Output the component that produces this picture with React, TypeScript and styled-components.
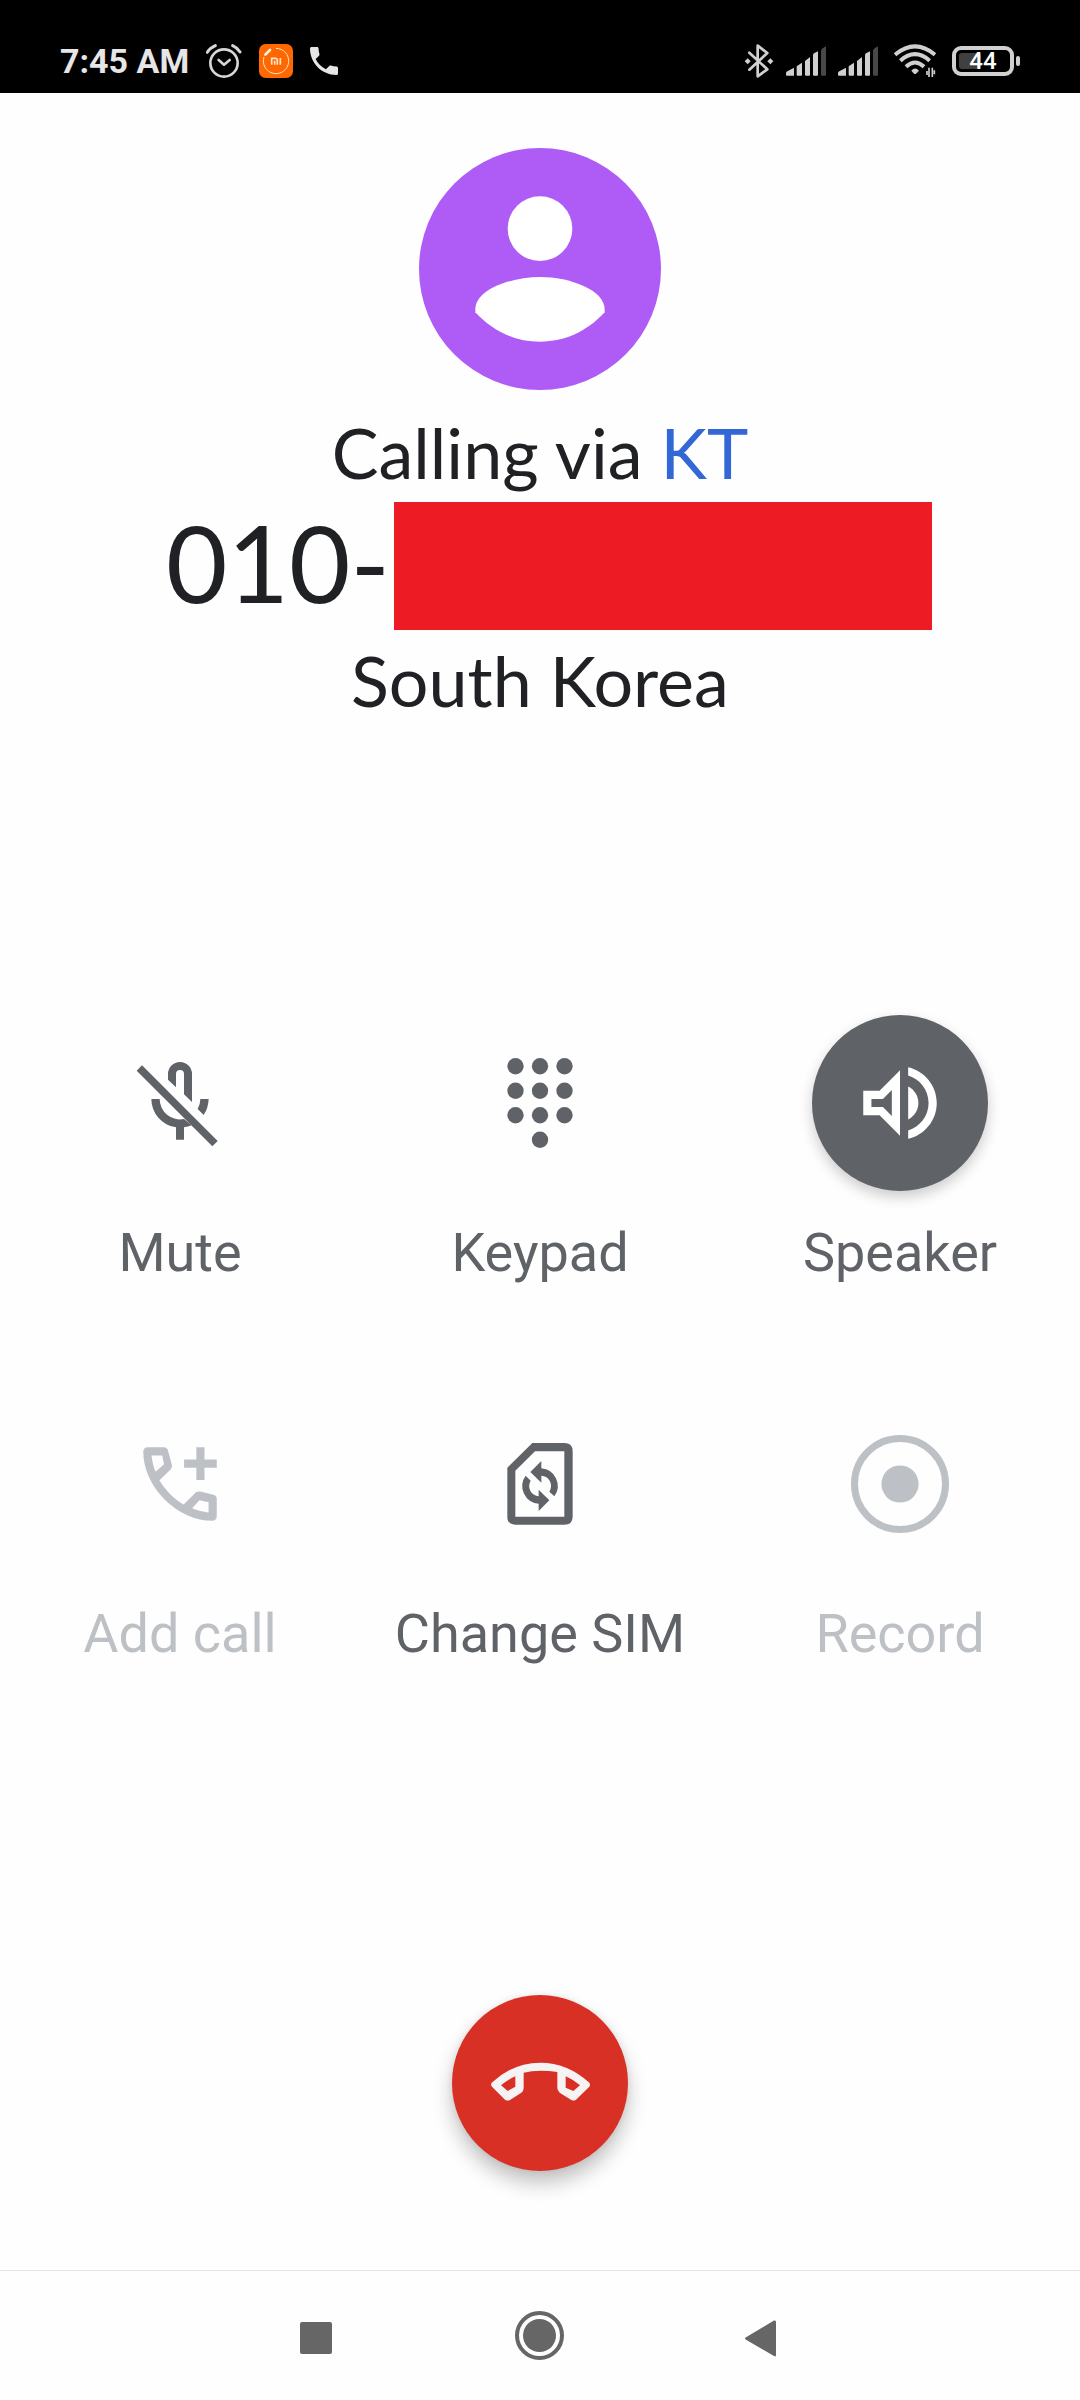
import React from "react";
import styled, { createGlobalStyle } from "styled-components";

const GlobalStyle = createGlobalStyle`
  *, *::before, *::after { box-sizing: border-box; }
  body { margin: 0; background: #fefefe; }
`;

const displayFont = `Lato, "Open Sans", sans-serif`;
const bodyFont = `Roboto, "Noto Sans", sans-serif`;

const Screen = styled.div`
  display: flex;
  flex-direction: column;
  min-height: 100vh;
  background: #fefefe;
  color: #202124;
  font-family: ${bodyFont};
`;

/* Status bar */

const StatusBar = styled.header`
  display: flex;
  justify-content: space-between;
  align-items: center;
  height: 93px;
  padding: 29px 60px 0;
  background: #000;
  color: #e6e6e6;
`;

const StatusGroup = styled.div<{ $gap: number }>`
  display: flex;
  align-items: center;
  gap: ${(p) => p.$gap}px;
`;

const Clock = styled.time`
  font-size: 34px;
  line-height: 40px;
  font-weight: 700;
`;

const Glyph = styled.svg`
  display: block;
  flex: none;
`;

const Battery = styled.div`
  display: flex;
  align-items: center;
  gap: 2px;
`;

const BatteryBody = styled.div`
  position: relative;
  display: flex;
  align-items: center;
  justify-content: center;
  width: 62px;
  height: 30px;
  border: 4px solid #d0d0d0;
  border-radius: 9px;
  font-size: 24px;
  line-height: 24px;
  font-weight: 500;
  color: #fff;
`;

const BatteryLevel = styled.span`
  position: absolute;
  left: 3px;
  top: 3px;
  bottom: 3px;
  width: 22px;
  border-radius: 3px;
  background: #404040;
`;

const BatteryText = styled.span`
  position: relative;
`;

const BatteryCap = styled.span`
  width: 4px;
  height: 10px;
  border-radius: 2px;
  background: #d0d0d0;
`;

/* Call */

const Call = styled.main`
  display: flex;
  flex: 1;
  flex-direction: column;
  align-items: center;
  padding: 55px 0 99px;
`;

const Caller = styled.section`
  display: flex;
  flex-direction: column;
  align-items: center;
  font-family: ${displayFont};
`;

const CallLine = styled.p`
  margin: 0;
  font-size: 70px;
  line-height: 100px;
`;

const StatusLine = styled(CallLine)`
  margin-top: 12px;
`;

const Carrier = styled.span`
  color: #3367d6;
`;

const NumberRow = styled.h1`
  display: flex;
  align-items: flex-start;
  gap: 4px;
  margin: 0;
  padding-left: 18px;
  font-size: 106px;
  line-height: 120px;
  font-weight: 400;
`;

const Redaction = styled.span`
  width: 538px;
  height: 128px;
  background: #ed1c24;
`;

const Actions = styled.section`
  display: grid;
  grid-template-columns: repeat(3, 1fr);
  row-gap: 111px;
  width: 100%;
  margin-top: 285px;
`;

const Action = styled.button`
  display: flex;
  flex-direction: column;
  align-items: center;
  gap: 30px;
  padding: 0;
  border: 0;
  background: none;
  color: #5f6368;
  font-family: ${bodyFont};
  font-size: 54px;
  line-height: 64px;
  cursor: pointer;

  &:disabled {
    color: #bdc1c6;
    cursor: default;
  }
`;

const ActionDisc = styled.span<{ $active?: boolean }>`
  display: flex;
  align-items: center;
  justify-content: center;
  width: 176px;
  height: 176px;
  border-radius: 50%;
  background: ${(p) => (p.$active ? "#5f6368" : "transparent")};
  color: ${(p) => (p.$active ? "#fff" : "inherit")};
  box-shadow: ${(p) => (p.$active ? "0 6px 14px rgba(0, 0, 0, 0.2)" : "none")};
`;

const EndCall = styled.button`
  display: flex;
  align-items: center;
  justify-content: center;
  width: 176px;
  height: 176px;
  margin-top: auto;
  padding: 0;
  border: 0;
  border-radius: 50%;
  background: #d93025;
  color: #f5f3f3;
  box-shadow: 0 12px 20px rgba(0, 0, 0, 0.24), 0 0 6px rgba(0, 0, 0, 0.08);
  cursor: pointer;
`;

/* System navigation */

const SystemNav = styled.nav`
  display: flex;
  justify-content: center;
  align-items: center;
  gap: 160px;
  height: 130px;
  border-top: 1px solid #e3e3e3;
`;

const NavButton = styled.button`
  display: flex;
  padding: 0;
  border: 0;
  background: none;
  color: #666;
  cursor: pointer;
`;

/* Icons */

const AlarmIcon = () => (
  <Glyph width="36" height="36" viewBox="501 69 108 108" fill="none" stroke="#d6d6d6" aria-hidden="true">
    <circle cx="555" cy="129" r="41" strokeWidth="8" />
    <path d="M539 120l16 14 17-14" strokeWidth="8" strokeLinecap="round" strokeLinejoin="round" />
    <path d="M505 97q8-13 24-20M603 96q-8-13-22-19" strokeWidth="9" strokeLinecap="round" />
  </Glyph>
);

const MiIcon = () => (
  <Glyph width="34" height="34" viewBox="654 69 102 102" fill="none" aria-hidden="true">
    <rect x="654" y="69" width="102" height="102" rx="20" fill="#ff6700" />
    <path d="M705 82a38 38 0 1 1-36 26" stroke="#ffe3cc" strokeWidth="3" />
    <path d="M673 101l14-14" stroke="#fff3e6" strokeWidth="8" strokeLinecap="round" />
    <path d="M692 131v-19h11q6 0 6 6v13M701 131v-12M718 131v-20" stroke="#ffe3cc" strokeWidth="5" />
  </Glyph>
);

const PhoneIcon = () => (
  <Glyph width="28" height="28" viewBox="3 3 18 18" fill="#e6e6e6" aria-hidden="true">
    <path d="M6.62 10.79c1.44 2.83 3.76 5.14 6.59 6.59l2.2-2.2c.27-.27.67-.36 1.02-.24 1.12.37 2.33.57 3.57.57.55 0 1 .45 1 1V20c0 .55-.45 1-1 1-9.39 0-17-7.61-17-17 0-.55.45-1 1-1h3.5c.55 0 1 .45 1 1 0 1.25.2 2.45.57 3.57.11.35.03.74-.25 1.02l-2.2 2.2z" />
  </Glyph>
);

const BluetoothIcon = () => (
  <Glyph width="30" height="34" viewBox="45 69 90 102" fill="none" aria-hidden="true">
    <path d="M61 95l54 50-29 21V74l29 22-54 50" stroke="#d0d0d0" strokeWidth="8" strokeLinejoin="round" strokeLinecap="round" />
    <path d="M47 121l9-9 9 9-9 9zM115 121l9-9 9 9-9 9z" fill="#d0d0d0" />
  </Glyph>
);

const SignalIcon = () => (
  <Glyph width="40" height="30" viewBox="162 73 120 90" fill="#d0d0d0" aria-hidden="true">
    <path d="M162 154q0-3 4-5l20-11v24h-21q-3 0-3-3z" />
    <path d="M194 134l16-11v36q0 3-3 3h-10q-3 0-3-3z" />
    <path d="M219 118l15-12v53q0 3-3 3h-9q-3 0-3-3z" />
    <path d="M243 101q0-4 3-6l12-6v70q0 3-3 3h-9q-3 0-3-3z" />
    <path d="M267 88q0-5 5-8l10-6v85q0 3-3 3h-9q-3 0-3-3z" fill="#484848" />
  </Glyph>
);

const WifiIcon = () => (
  <Glyph width="42" height="34" viewBox="492 74 126 102" fill="none" stroke="#d0d0d0" aria-hidden="true">
    <path d="M495 106q60-50 120 0" strokeWidth="12" />
    <path d="M511 124q44-39 88 0" strokeWidth="12" />
    <path d="M528 142q27-25 54 0" strokeWidth="12" />
    <path d="M544 154q11-13 23 0l-9 9q-3 2-6 0z" fill="#d0d0d0" stroke="none" />
    <path d="M597 173v-28M591 155v12M607 145v28M613 153v12" strokeWidth="5" />
  </Glyph>
);

const AvatarIcon = () => (
  <Glyph width="242" height="242" viewBox="57 54 726 726" role="img" aria-label="Contact">
    <circle cx="420" cy="417" r="363" fill="#af5cf7" />
    <circle cx="420" cy="296" r="97" fill="#fff" />
    <path d="M226 538C226 480 330 441 420 441S614 480 614 538V547C560 605 494 635 420 635S280 605 226 547z" fill="#fff" />
  </Glyph>
);

const MuteIcon = () => (
  <Glyph width="98" height="98" viewBox="93 72 294 294" fill="currentColor" aria-hidden="true">
    <path d="M110 122l16-16 227 227-16 16z" />
    <path d="M204 149v-17a36 36 0 0 1 72 0v84l-24-23v-61a12 12 0 0 0-24 0v40z" />
    <path d="M301 207h25q-1 27-15 48l-18-18q8-14 8-30z" />
    <path d="M154 207h25A61 61 0 0 0 252 267L275 286Q264 290 252 292V329H228V292A86 86 0 0 1 154 207z" />
  </Glyph>
);

const KeypadIcon = () => (
  <Glyph width="98" height="98" viewBox="0 0 24 24" fill="currentColor" aria-hidden="true">
    {[3, 9, 15].map((y) => [6, 12, 18].map((x) => <circle key={`${x}-${y}`} cx={x} cy={y} r="2" />))}
    <circle cx="12" cy="21" r="2" />
  </Glyph>
);

const SpeakerIcon = () => (
  <Glyph width="98" height="98" viewBox="0 0 24 24" fill="currentColor" aria-hidden="true">
    <path d="M3 9v6h4l5 5V4L7 9H3zm7-.17v6.34L7.83 13H5v-2h2.83L10 8.83z" />
    <path d="M16.5 12c0-1.77-1.02-3.29-2.5-4.03v8.05c1.48-.73 2.5-2.25 2.5-4.02z" />
    <path d="M14 3.23v2.06c2.89.86 5 3.54 5 6.71s-2.11 5.85-5 6.71v2.06c4.01-.91 7-4.49 7-8.77s-2.99-7.86-7-8.77z" />
  </Glyph>
);

const AddCallIcon = () => (
  <Glyph width="98" height="98" viewBox="0 0 24 24" fill="currentColor" aria-hidden="true">
    <path d="M19.95 21q-3.125 0-6.175-1.363t-5.55-3.862q-2.5-2.5-3.862-5.55T3 4.05q0-.45.3-.75t.75-.3H8.1q.35 0 .625.238t.325.562l.95 3.5q.05.4-.025.675T9.7 8.45L6.975 11.1q.5.925 1.187 1.787t1.513 1.663q.775.775 1.625 1.438T12.9 17l2.75-2.75q.225-.225.588-.337t.712-.063l3.25.8q.35.1.575.363T21 15.6v4.35q0 .45-.3.75t-.75.3M6.025 9l2.05-1.85L7.65 5H5.025q.125 1.025.35 2.025T6.025 9m8.95 8.95q.975.425 1.988.675T19 18.95v-2.5l-2.25-.475zm0 0" />
    <path d="M16 3h2v3h3v2h-3v3h-2V8h-3V6h3z" />
  </Glyph>
);

const SimIcon = () => (
  <Glyph width="98" height="98" viewBox="333 45 294 294" fill="currentColor" aria-hidden="true">
    <path
      fillRule="evenodd"
      d="M382 143L457 69H553Q578 69 578 94V290Q578 314 553 314H406Q382 314 382 290zM406 152V290H553V94H465z"
    />
    <path d="M451 156L484 123V145A53 53 0 0 1 523 229L508 215A31 31 0 0 0 484 167V188z" />
    <path d="M437 167L452 182A31 31 0 0 0 476 229V209L508 241L476 273V251A53 53 0 0 1 437 167z" />
  </Glyph>
);

const RecordIcon = () => (
  <Glyph width="98" height="98" viewBox="0 0 98 98" aria-hidden="true">
    <circle cx="49" cy="49" r="45.5" fill="none" stroke="currentColor" strokeWidth="7" />
    <circle cx="49" cy="49" r="18.6" fill="currentColor" />
  </Glyph>
);

const HangUpIcon = () => (
  <Glyph width="98" height="98" viewBox="183 192 294 294" overflow="visible" fill="currentColor" fillRule="evenodd" aria-hidden="true">
    <path d="M185 338Q250 278 331 278T478 338Q482 344 478 350L438 389Q431 394 424 390L389 368Q382 362 382 354V306Q357 302 331 302T281 308V354Q281 363 274 368L240 390Q232 394 225 389L186 350Q181 344 185 338zM213 346L233 363L256 350V319Q234 328 213 346zM450 346L430 363L407 353V319Q429 328 450 346z" />
  </Glyph>
);

const actions = [
  { label: "Mute", Icon: MuteIcon },
  { label: "Keypad", Icon: KeypadIcon },
  { label: "Speaker", Icon: SpeakerIcon, active: true },
  { label: "Add call", Icon: AddCallIcon, disabled: true },
  { label: "Change SIM", Icon: SimIcon },
  { label: "Record", Icon: RecordIcon, disabled: true },
];

export default function App() {
  return (
    <>
      <GlobalStyle />
      <Screen>
        <StatusBar>
          <StatusGroup $gap={17}>
            <Clock>7:45 AM</Clock>
            <AlarmIcon />
            <MiIcon />
            <PhoneIcon />
          </StatusGroup>
          <StatusGroup $gap={16}>
            <StatusGroup $gap={12}>
              <BluetoothIcon />
              <SignalIcon />
              <SignalIcon />
            </StatusGroup>
            <WifiIcon />
            <Battery>
              <BatteryBody>
                <BatteryLevel />
                <BatteryText>44</BatteryText>
              </BatteryBody>
              <BatteryCap />
            </Battery>
          </StatusGroup>
        </StatusBar>

        <Call>
          <Caller>
            <AvatarIcon />
            <StatusLine>
              Calling via <Carrier>KT</Carrier>
            </StatusLine>
            <NumberRow>
              010-
              <Redaction />
            </NumberRow>
            <CallLine>South Korea</CallLine>
          </Caller>

          <Actions>
            {actions.map(({ label, Icon, active, disabled }) => (
              <Action key={label} type="button" disabled={disabled}>
                <ActionDisc $active={active}>
                  <Icon />
                </ActionDisc>
                {label}
              </Action>
            ))}
          </Actions>

          <EndCall type="button" aria-label="End call">
            <HangUpIcon />
          </EndCall>
        </Call>

        <SystemNav>
          <NavButton type="button" aria-label="Recent apps">
            <Glyph width="64" height="64" viewBox="0 0 64 64" fill="currentColor">
              <rect x="16" y="18" width="32" height="32" rx="2" />
            </Glyph>
          </NavButton>
          <NavButton type="button" aria-label="Home">
            <Glyph width="64" height="64" viewBox="0 0 64 64" fill="currentColor">
              <circle cx="31.5" cy="31.5" r="22.5" fill="none" stroke="currentColor" strokeWidth="4" />
              <circle cx="31.5" cy="31.5" r="16.5" />
            </Glyph>
          </NavButton>
          <NavButton type="button" aria-label="Back">
            <Glyph width="64" height="64" viewBox="0 0 64 64" fill="currentColor">
              <path d="M14 33.3L42 16.6Q44 15.8 44 18V51Q44 53.2 42 52L14 35.7Q12 34.5 14 33.3z" />
            </Glyph>
          </NavButton>
        </SystemNav>
      </Screen>
    </>
  );
}
